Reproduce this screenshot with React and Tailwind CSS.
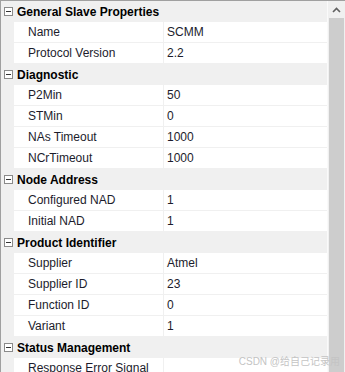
import React from 'react';

const groups = [
    {
        title: 'General Slave Properties',
        items: [
            ['Name', 'SCMM'],
            ['Protocol Version', '2.2'],
        ],
    },
    {
        title: 'Diagnostic',
        items: [
            ['P2Min', '50'],
            ['STMin', '0'],
            ['NAs Timeout', '1000'],
            ['NCrTimeout', '1000'],
        ],
    },
    {
        title: 'Node Address',
        items: [
            ['Configured NAD', '1'],
            ['Initial NAD', '1'],
        ],
    },
    {
        title: 'Product Identifier',
        items: [
            ['Supplier', 'Atmel'],
            ['Supplier ID', '23'],
            ['Function ID', '0'],
            ['Variant', '1'],
        ],
    },
    {
        title: 'Status Management',
        items: [['Response Error Signal', '']],
    },
];

const MinusBox = () => (
    <div className="w-[9px] h-[9px] border border-[#8a8a8a] bg-white flex items-center justify-center shrink-0">
        <div className="w-[5px] h-px bg-[#333]" />
    </div>
);

const GroupRow = ({ title }) => (
    <div className="h-[21px] flex items-center bg-[#f0f0f0]">
        <div className="w-[14px] pl-[3px] flex items-center">
            <MinusBox />
        </div>
        <span className="ml-[2px] font-bold text-black">{title}</span>
    </div>
);

const PropRow = ({ label, value }) => (
    <div className="h-[21px] flex bg-[#f0f0f0]">
        <div className="w-[13px] shrink-0" />
        <div className="flex-1 flex bg-white border-b border-[#f0f0f0]">
            <div className="w-[150px] pl-[14px] flex items-center border-r border-[#f0f0f0] text-[#1c1c2c]">{label}</div>
            <div className="flex-1 pl-[3px] flex items-center text-[#1c1c2c]">{value}</div>
        </div>
    </div>
);

const Scrollbar = () => (
    <div className="w-[18px] h-full bg-[#f0f0f0] border-l border-[#fafafa] flex flex-col">
        <div className="h-[17px] flex items-center justify-center">
            <svg width="9" height="6" viewBox="0 0 9 6">
                <path d="M1 5 L4.5 1.5 L8 5" fill="none" stroke="#606060" strokeWidth="1.6" />
            </svg>
        </div>
        <div className="flex-1 mx-[1px] bg-[#cdcdcd]" />
        <div className="h-[17px] flex items-center justify-center">
            <svg width="9" height="6" viewBox="0 0 9 6">
                <path d="M1 1 L4.5 4.5 L8 1" fill="none" stroke="#606060" strokeWidth="1.6" />
            </svg>
        </div>
    </div>
);

export default function App() {
    return (
        <div className="relative w-[345px] h-[372px] overflow-hidden bg-[#f0f0f0] border-l border-t border-[#a0a0a0] flex text-[12px] font-['Liberation_Sans',sans-serif] leading-none">
            <div className="flex-1 h-[390px]">
                {groups.map((g) => (
                    <div key={g.title}>
                        <GroupRow title={g.title} />
                        {g.items.map(([label, value]) => (
                            <PropRow key={label} label={label} value={value} />
                        ))}
                    </div>
                ))}
            </div>
            <div className="h-[389px]">
                <Scrollbar />
            </div>
            <span className="absolute right-[5px] bottom-[5px] text-[10px] leading-none text-[#c4c4c4] font-['Liberation_Sans','Noto_Sans_CJK_SC',sans-serif]">
                CSDN @给自己记录用
            </span>
        </div>
    );
}
